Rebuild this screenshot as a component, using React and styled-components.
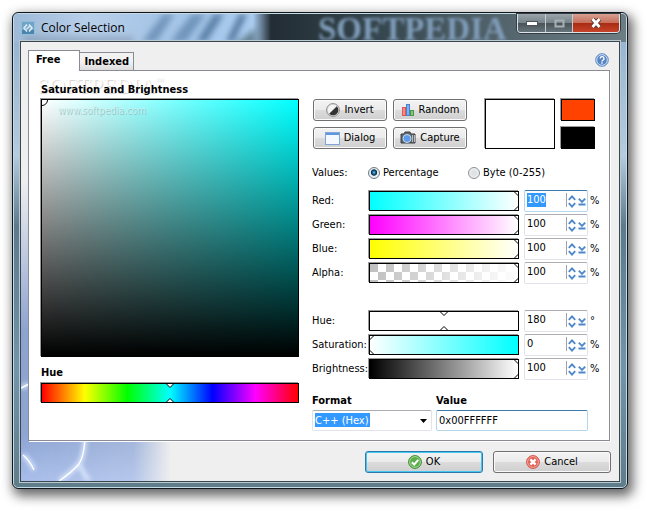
import React, { useState } from "react";
import styled, { createGlobalStyle } from "styled-components";

const GlobalStyle = createGlobalStyle`
  * {
    box-sizing: border-box;
  }
  body {
    margin: 0;
    background: #fff;
    color: #000;
    font: 11px/14px "DejaVu Sans Condensed", "DejaVu Sans", sans-serif;
  }
  button, input, select {
    font: inherit;
    color: inherit;
    margin: 0;
  }
  svg {
    flex-shrink: 0;
  }
`;

const Page = styled.div`
  padding: 12px 20px 20px 12px;
`;

const Window = styled.main`
  position: relative;
  padding: 1px 7px 6px;
  border: 1px solid #10161a;
  border-radius: 6px;
  background: linear-gradient(#8fb0d0 0, #b4cbe0 30%, #5c7a8c 45%, #7195ab 75%, #5f7c8a 100%);
  box-shadow: inset 0 0 0 1px #c5dbe6, 3px 5px 12px 2px rgba(0, 0, 0, 0.6);
`;

const TitleBar = styled.header`
  position: relative;
  display: flex;
  align-items: center;
  justify-content: space-between;
  height: 27px;
  font: 12px/16px "Open Sans", "Noto Sans", sans-serif;
`;

const Glass = styled.svg`
  position: absolute;
  left: -6px;
  top: 0;
  width: calc(100% + 12px);
  height: 28px;
  overflow: visible;
`;

const Title = styled.h1`
  position: relative;
  display: flex;
  align-items: center;
  gap: 6px;
  margin: 0;
  padding-left: 1px;
  font: inherit;
`;

const Caption = styled.div`
  position: relative;
  align-self: flex-start;
  display: flex;
  overflow: hidden;
  border: 1px solid #dde4e8;
  border-top: 0;
  border-radius: 0 0 4px 4px;
  box-shadow: 0 0 0 1px #333c42;
`;

const CaptionButton = styled.button`
  display: flex;
  align-items: center;
  justify-content: center;
  width: ${props => props.$close ? "47px" : "27px"};
  height: 18px;
  padding: 0;
  border: 0;
  border-left: ${props => props.$first ? "0" : "1px solid #c5ccd0"};
  background: ${props => props.$close
    ? "linear-gradient(#d8a091 0, #c7705c 48%, #a92a12 50%, #c5442a 100%)"
    : "linear-gradient(#9ba5ab 0, #77848b 48%, #485258 50%, #67747b 100%)"};
`;

const Client = styled.div`
  position: relative;
  overflow: hidden;
  border: 1px solid #39464d;
  outline: 1px solid #b9c9d0;
  padding: 8px 8px 8px 7px;
  background: #efefef;
`;

const Backdrop = styled.svg`
  position: absolute;
  left: 0;
  bottom: 0;
  width: 150px;
  height: 300px;
`;

const TabBar = styled.div`
  position: relative;
  display: flex;
  align-items: flex-end;
  height: 20px;
`;

const Tab = styled.button`
  height: ${props => props.$active ? "20px" : "18px"};
  padding: ${props => props.$active ? "0 19px 1px 7px" : "0 4px"};
  border: 1px solid #8b8b96;
  border-bottom: 0;
  border-left-width: ${props => props.$active ? "1px" : "0"};
  background: ${props => props.$active ? "#fff" : "linear-gradient(#f2f2f2 50%, #dcdcdc)"};
  font-weight: bold;
  white-space: nowrap;
`;

const HelpButton = styled.button`
  display: flex;
  margin: 0 2px 3px auto;
  padding: 0;
  border: 0;
  background: none;
`;

const TabPanel = styled.section`
  position: relative;
  display: flex;
  gap: 13px;
  margin-right: 1px;
  padding: 12px 14px 9px 12px;
  border: 1px solid #8b8b96;
  background: #fff;
  box-shadow: 1px 1px 0 #fff;
`;

const TabCover = styled.span`
  position: absolute;
  left: 0;
  top: -1px;
  width: 50px;
  height: 1px;
  background: #fff;
`;

const FieldColumn = styled.div`
  position: relative;
  flex: 258 1 0;
  min-width: 0;
`;

const ControlColumn = styled.div`
  flex: 283 1 0;
  min-width: 0;
`;

const Heading = styled.h2`
  margin: 0 0 2px;
  font-size: 11px;
  line-height: 14px;
  font-weight: bold;
  white-space: nowrap;
`;

const Watermark = styled.div`
  position: absolute;
  left: 8px;
  top: 3px;
  color: #fff;
  text-shadow: 1px 1px 1px #d0d0d0;
  font: 22px/24px "Liberation Serif", serif;
  pointer-events: none;
  sup {
    font-size: 8px;
    line-height: 8px;
    vertical-align: 10px;
  }
`;

const FieldMark = styled.div`
  position: absolute;
  left: 16px;
  top: 4px;
  color: rgba(215, 238, 238, 0.75);
  text-shadow: 1px 1px 0 rgba(110, 160, 160, 0.5);
  font: 10px/14px "DejaVu Sans Condensed", sans-serif;
`;

const ColorField = styled.div`
  position: relative;
  aspect-ratio: 1;
  margin-bottom: 9px;
  border: 1px solid #000;
  box-shadow: -1px -1px 0 #999;
  background: linear-gradient(transparent, #000), linear-gradient(to right, #fff, #0ff);
`;

const FieldMarker = styled.svg`
  position: absolute;
  left: 0;
  top: 0;
  width: 7px;
  height: 7px;
`;

const SliderBox = styled.div`
  position: relative;
  height: 20px;
  min-width: 0;
  border: 1px solid #000;
  box-shadow: -1px -1px 0 #999;
  background: ${props => props.$fill};
`;

const MarkerTrack = styled.div`
  position: absolute;
  inset: 0;
  overflow: hidden;
  pointer-events: none;
`;

const Range = styled.input`
  display: block;
  width: 100%;
  height: 100%;
  opacity: 0;
`;

const Marker = styled.svg`
  position: absolute;
  top: 0;
  width: 9px;
  height: 18px;
  transform: translateX(-50%);
`;

const HueLine = styled.div`
  padding-top: 1px;
`;

const TopRow = styled.div`
  display: flex;
  justify-content: space-between;
  margin-top: 16px;
  padding-left: 1px;
`;

const ActionGrid = styled.div`
  display: grid;
  grid-template-columns: 74px 74px;
  gap: 6px;
`;

const PushButton = styled.button`
  display: flex;
  align-items: center;
  justify-content: center;
  gap: 4px;
  height: 22px;
  padding: 0 2px;
  border: 1px solid ${props => props.$default ? "#2a7bab" : "#707070"};
  border-radius: 3px;
  background: linear-gradient(#f3f3f3 0, #ebebeb 48%, #dcdcdc 50%, #cfcfcf 100%);
  box-shadow: inset 0 0 0 1px ${props => props.$default ? "#44c8f3" : "#fafafa"};
  white-space: nowrap;
`;

const Swatches = styled.div`
  display: grid;
  grid-template-columns: 70px 34px;
  grid-template-rows: 22px 22px;
  gap: 6px;
`;

const Swatch = styled.div`
  grid-row: ${props => props.$tall ? "1 / 3" : "auto"};
  border: 1px solid #000;
  box-shadow: -1px -1px 0 #999;
  background: ${props => props.$color};
`;

const Modes = styled.div`
  display: grid;
  grid-template-columns: 56px 100px 1fr;
  align-items: center;
  height: 16px;
  margin: 16px 0 9px;
`;

const ModeLabel = styled.label`
  display: flex;
  align-items: center;
  gap: 3px;
`;

const Radio = styled.input`
  appearance: none;
  width: 12px;
  height: 12px;
  border: 1px solid #8b8f94;
  border-radius: 50%;
  background: radial-gradient(#dfe2e5 30%, #fafafa);
  &:checked {
    border-color: #6d7a84;
    background: radial-gradient(circle at 50% 45%, #7fd0f0 0, #16668f 20%, #0b2f4a 38%, #e8eef2 48%);
  }
`;

const Channels = styled.div`
  display: grid;
  gap: 2px;
  margin-bottom: ${props => props.$last ? "14px" : "26px"};
`;

const ChannelRow = styled.div`
  display: grid;
  grid-template-columns: 57px 1fr 64px 12px;
  align-items: center;
  height: 22px;
`;

const ChannelLabel = styled.label`
  white-space: nowrap;
`;

const SpinBox = styled.div`
  display: flex;
  align-items: flex-start;
  height: 22px;
  margin-left: 5px;
  margin-right: -5px;
  border: 1px solid ${props => props.$focused ? "#b5d5ec" : "#e2e3ea"};
  border-top-color: ${props => props.$focused ? "#3d7bad" : "#abadb3"};
  border-radius: 2px;
`;

const SpinInput = styled.input`
  flex: 1;
  min-width: 0;
  height: 14px;
  margin-top: 2px;
  padding: 0 0 0 2px;
  border: 0;
  border-right: 1px solid #a0a0a0;
  outline: 0;
  background: ${props => props.$focused
    ? "linear-gradient(#3399ff, #3399ff) 2px 0 / 19px 14px no-repeat"
    : "none"};
  color: ${props => props.$focused ? "#fff" : "#000"};
`;

const SpinButton = styled.button`
  display: flex;
  padding: 4px 1px 0;
  border: 0;
  background: none;
`;

const Unit = styled.span`
  padding-left: 7px;
`;

const OutputRow = styled.div`
  display: grid;
  grid-template-columns: 120px 1fr;
  gap: 4px;
  margin-right: 7px;
`;

const OutputLabel = styled.label`
  display: block;
  margin-bottom: 2px;
  font-weight: bold;
`;

const SelectBox = styled.div`
  position: relative;
`;

const Select = styled.select`
  display: block;
  appearance: none;
  width: 100%;
  height: 21px;
  padding: 0 0 0 2px;
  border: 1px solid #e2e3ea;
  border-top-color: #abadb3;
  border-radius: 2px;
  background: linear-gradient(#3399ff, #3399ff) 2px 2px / 55px 14px no-repeat #fff;
  color: #fff;
`;

const SelectArrow = styled.svg`
  position: absolute;
  right: 5px;
  top: 9px;
  width: 7px;
  height: 4px;
  pointer-events: none;
`;

const ValueInput = styled.input`
  display: block;
  width: 100%;
  height: 21px;
  padding: 0 2px;
  border: 1px solid #b5d5ec;
  border-top-color: #3d7bad;
  border-radius: 2px;
`;

const Footer = styled.footer`
  position: relative;
  display: grid;
  grid-template-columns: 118px 118px;
  justify-content: end;
  gap: 10px;
  margin-top: 10px;
`;

const InvertIcon = () => (
  <svg width="14" height="14" viewBox="0 0 14 14">
    <circle cx="7" cy="7" r="6.4" fill="#e4e4e4" stroke="#8a8a8a" />
    <circle cx="7" cy="7" r="4.9" fill="#f4f4f4" />
    <path d="M10.8 3.2A5.3 5.3 0 0 1 3.2 10.8Z" fill="#333" />
  </svg>
);

const RandomIcon = () => (
  <svg width="14" height="14" viewBox="0 0 14 14">
    <rect x="1.5" y="4.5" width="3" height="8" fill="#f58c8c" stroke="#e05656" />
    <rect x="5.5" y="1.5" width="3" height="11" fill="#7db0ee" stroke="#4a80cc" />
    <rect x="9.5" y="7.5" width="3" height="5" fill="#86c77e" stroke="#4a9443" />
  </svg>
);

const DialogIcon = () => (
  <svg width="15" height="13" viewBox="0 0 15 13">
    <rect x="0.5" y="0.5" width="14" height="12" fill="#f4f9ff" stroke="#7fa6d4" />
    <rect x="1" y="1" width="13" height="2" fill="#5f98dc" />
  </svg>
);

const CaptureIcon = () => (
  <svg width="16" height="14" viewBox="0 0 16 14">
    <path d="M1 3h3l1-2h5l1 2h4v9H1Z" fill="#62666c" stroke="#3b3f44" />
    <circle cx="7" cy="7.5" r="4" fill="#5b9bea" stroke="#c5d9f0" />
    <path d="M12.5 4v7M14.5 4v7" stroke="#b9bcc0" />
  </svg>
);

const OkIcon = () => (
  <svg width="14" height="14" viewBox="0 0 14 14">
    <circle cx="7" cy="7" r="6.4" fill="#5cae4a" stroke="#3c8a32" />
    <circle cx="7" cy="7" r="5.4" fill="none" stroke="#a3d796" />
    <path d="M3.8 7.2 6.2 9.5 10.3 4.8" fill="none" stroke="#fff" strokeWidth="2" />
  </svg>
);

const CancelIcon = () => (
  <svg width="14" height="14" viewBox="0 0 14 14">
    <circle cx="7" cy="7" r="6.4" fill="#e35d50" stroke="#d0564b" />
    <circle cx="7" cy="7" r="5.4" fill="none" stroke="#f3aaa2" />
    <path d="M4.4 4.4 9.6 9.6M9.6 4.4 4.4 9.6" stroke="#fff" strokeWidth="2.5" />
  </svg>
);

const HelpIcon = () => (
  <svg width="14" height="14" viewBox="0 0 14 14">
    <circle cx="7" cy="7" r="6.4" fill="#5584c4" stroke="#7d9fce" />
    <circle cx="7" cy="7" r="5.3" fill="none" stroke="#cfdff4" />
    <path d="M5.2 5.6a1.9 1.9 0 1 1 2.6 1.7q-.8.3-.8 1.2M7 9.3v1.4" fill="none" stroke="#fff" strokeWidth="1.4" />
  </svg>
);

const AppIcon = () => (
  <svg width="14" height="14" viewBox="0 0 14 14">
    <rect x="0.5" y="0.5" width="13" height="13" fill="#6fa5c8" stroke="#94bcd6" />
    <path d="M1 9h12v4H1Z" fill="#4a86ae" />
    <path d="M6 3.5 3 7l3 3.5M8 3.5 11 7l-3 3.5M5.5 8l3-2.5" fill="none" stroke="#dcecf5" strokeWidth="1.6" />
  </svg>
);

const SpinArrows = () => (
  <svg width="8" height="13" viewBox="0 0 8 13">
    <path d="M.8 4.8 4 1.4 7.2 4.8M.8 8.2 4 11.6 7.2 8.2" fill="none" stroke="#4e88c9" strokeWidth="1.9" />
  </svg>
);

const SpinDrop = () => (
  <svg width="8" height="13" viewBox="0 0 8 13">
    <path d="M.8 3.6 4 6.8 7.2 3.6M.5 9.5h7" fill="none" stroke="#4e88c9" strokeWidth="1.9" />
  </svg>
);

const GlassArt = () => (
  <Glass viewBox="0 0 612 28" preserveAspectRatio="none">
    <defs>
      <filter id="soft"><feGaussianBlur stdDeviation="3" /></filter>
      <filter id="softText"><feGaussianBlur stdDeviation="1.8" /></filter>
      <linearGradient id="sky">
        <stop offset="0" stopColor="#9dbad8" />
        <stop offset=".12" stopColor="#b8cfe9" />
        <stop offset=".24" stopColor="#a5c4e6" />
        <stop offset=".39" stopColor="#aacdf0" />
        <stop offset=".42" stopColor="#222d34" />
        <stop offset=".6" stopColor="#36474f" />
        <stop offset=".82" stopColor="#56676f" />
        <stop offset="1" stopColor="#6d7d84" />
      </linearGradient>
      <clipPath id="bar"><path d="M0 28V4Q0 0 4 0H608Q612 0 612 4V28Z" /></clipPath>
    </defs>
    <g clipPath="url(#bar)">
      <rect width="612" height="28" fill="url(#sky)" />
      <g filter="url(#soft)">
        <path d="M10 22H120V32H10Z" fill="#8398b3" opacity=".6" />
        <path d="M128 28 150 0h10L142 28ZM156 28 178 0h14L172 28Z" fill="#5a7fa8" opacity=".7" />
        <path d="M182 28 200 0h10L192 28Z" fill="#466a94" opacity=".8" />
        <path d="M212 28 226 0h7L219 28Z" fill="#4d6f98" />
        <path d="M218 32 242 14V32Z" fill="#56707f" opacity=".8" />
      </g>
      <text
        x="304" y="26" fill="#7f9cb9" filter="url(#softText)"
        fontFamily="Liberation Serif, serif" fontWeight="bold" fontSize="33"
      >
        SOFTPEDIA
      </text>
    </g>
  </Glass>
);

const BackdropArt = () => (
  <Backdrop viewBox="0 0 150 300">
    <defs>
      <linearGradient id="fade">
        <stop offset="0" stopColor="#fff" />
        <stop offset=".75" stopColor="#fff" stopOpacity=".8" />
        <stop offset="1" stopColor="#fff" stopOpacity="0" />
      </linearGradient>
      <linearGradient id="rise" x2="0" y2="1">
        <stop offset="0" stopColor="#8ca2d0" stopOpacity="0" />
        <stop offset=".5" stopColor="#8ca2d0" />
        <stop offset=".85" stopColor="#8da5d3" />
        <stop offset="1" stopColor="#a8bdea" />
      </linearGradient>
      <mask id="edge"><rect width="150" height="300" fill="url(#fade)" /></mask>
      <filter id="glow"><feGaussianBlur stdDeviation="2" /></filter>
    </defs>
    <g mask="url(#edge)">
      <rect width="150" height="300" fill="url(#rise)" />
      <path d="M64 258Q63 275 58 283Q51 291 38 300M58 283Q62 292 68 300M0 207 8 203M2 274Q9 280 13 289" fill="none" stroke="#dce9ff" strokeWidth="5" filter="url(#glow)" opacity=".8" />
      <path d="M64 258Q63 275 58 283Q51 291 38 300M0 207 8 203M2 274Q9 280 13 289" fill="none" stroke="#fff" strokeWidth="1.4" />
    </g>
  </Backdrop>
);

const checker = `linear-gradient(to right, rgba(255, 255, 255, 0), #fff),
  repeating-conic-gradient(#fff 0 25%, #c0c0c0 0 50%) 0 0 / 16px 16px`;

const rainbow = "linear-gradient(to right, red, yellow, lime, cyan, blue, magenta, red)";

const rgba = [
  { name: "Red", fill: "linear-gradient(to right, #0ff, #fff)", value: 100, max: 100, unit: "%", focused: true },
  { name: "Green", fill: "linear-gradient(to right, #f0f, #fff)", value: 100, max: 100, unit: "%" },
  { name: "Blue", fill: "linear-gradient(to right, #ff0, #fff)", value: 100, max: 100, unit: "%" },
  { name: "Alpha", fill: checker, value: 100, max: 100, unit: "%" },
];

const hsb = [
  { name: "Hue", fill: "#fff", value: 180, max: 360, unit: "°" },
  { name: "Saturation", fill: "linear-gradient(to right, #fff, #0ff)", value: 0, max: 100, unit: "%" },
  { name: "Brightness", fill: "linear-gradient(to right, #000, #fff)", value: 100, max: 100, unit: "%" },
];

const Slider = ({ label, fill, value, max, onChange }) => (
  <SliderBox $fill={fill}>
    <Range
      type="range" aria-label={label} min="0" max={max} value={value}
      onChange={e => onChange(Number(e.target.value))}
    />
    <MarkerTrack>
      <Marker viewBox="0 0 9 18" style={{ left: `${(value / max) * 100}%` }}>
        <path d="M.5-.5 4.5 3.5 8.5-.5M.5 18.5 4.5 14.5 8.5 18.5" fill="#fff" stroke="#000" />
      </Marker>
    </MarkerTrack>
  </SliderBox>
);

const Channel = ({ item }) => {
  const [value, setValue] = useState(item.value);
  const id = item.name.toLowerCase();
  return (
    <ChannelRow>
      <ChannelLabel htmlFor={id}>{item.name}:</ChannelLabel>
      <Slider label={`${item.name} slider`} fill={item.fill} value={value} max={item.max} onChange={setValue} />
      <SpinBox $focused={item.focused}>
        <SpinInput
          id={id} $focused={item.focused} value={value}
          onChange={e => setValue(Math.min(item.max, Number(e.target.value) || 0))}
        />
        <SpinButton aria-label={`Step ${id}`}><SpinArrows /></SpinButton>
        <SpinButton aria-label={`Open ${id} slider`}><SpinDrop /></SpinButton>
      </SpinBox>
      <Unit>{item.unit}</Unit>
    </ChannelRow>
  );
};

const App = () => {
  const [hue, setHue] = useState(180);
  const [mode, setMode] = useState("percentage");
  const [code, setCode] = useState("0x00FFFFFF");

  return (
    <Page>
      <GlobalStyle />
      <Window>
        <TitleBar>
          <GlassArt />
          <Title><AppIcon />Color Selection</Title>
          <Caption>
            <CaptionButton $first aria-label="Minimize">
              <svg width="12" height="5"><rect x=".5" y=".5" width="11" height="4" fill="#fff" stroke="#4b5358" /></svg>
            </CaptionButton>
            <CaptionButton aria-label="Maximize" disabled>
              <svg width="11" height="9"><rect x="1.5" y="1.5" width="8" height="6" fill="none" stroke="#a9b0b4" strokeWidth="2" /></svg>
            </CaptionButton>
            <CaptionButton $close aria-label="Close">
              <svg width="12" height="10" viewBox="0 0 12 10">
                <path d="M2.5 1 9.5 9M9.5 1 2.5 9" stroke="#54332d" strokeWidth="4.6" />
                <path d="M2.5 1 9.5 9M9.5 1 2.5 9" stroke="#fff" strokeWidth="2.8" />
              </svg>
            </CaptionButton>
          </Caption>
        </TitleBar>
        <Client>
          <BackdropArt />
          <TabBar>
            <Tab $active>Free</Tab>
            <Tab>Indexed</Tab>
            <HelpButton aria-label="Help"><HelpIcon /></HelpButton>
          </TabBar>
          <TabPanel>
            <TabCover />
            <Watermark>SOFTPEDIA<sup>™</sup></Watermark>
            <FieldColumn>
              <Heading>Saturation and Brightness</Heading>
              <ColorField>
                <FieldMarker viewBox="0 0 7 7">
                  <circle r="5.5" fill="#fff" stroke="#000" />
                </FieldMarker>
                <FieldMark>www.softpedia.com</FieldMark>
              </ColorField>
              <Heading>Hue</Heading>
              <HueLine>
                <Slider label="Hue" fill={rainbow} value={hue} max={360} onChange={setHue} />
              </HueLine>
            </FieldColumn>
            <ControlColumn>
              <TopRow>
                <ActionGrid>
                  <PushButton><InvertIcon />Invert</PushButton>
                  <PushButton><RandomIcon />Random</PushButton>
                  <PushButton><DialogIcon />Dialog</PushButton>
                  <PushButton><CaptureIcon />Capture</PushButton>
                </ActionGrid>
                <Swatches>
                  <Swatch $tall $color="#fff" />
                  <Swatch $color="#ff4200" />
                  <Swatch $color="#000" />
                </Swatches>
              </TopRow>
              <Modes>
                <span>Values:</span>
                <ModeLabel>
                  <Radio type="radio" name="mode" checked={mode === "percentage"} onChange={() => setMode("percentage")} />
                  Percentage
                </ModeLabel>
                <ModeLabel>
                  <Radio type="radio" name="mode" checked={mode === "byte"} onChange={() => setMode("byte")} />
                  Byte (0-255)
                </ModeLabel>
              </Modes>
              <Channels>
                {rgba.map(item => <Channel key={item.name} item={item} />)}
              </Channels>
              <Channels $last>
                {hsb.map(item => <Channel key={item.name} item={item} />)}
              </Channels>
              <OutputRow>
                <div>
                  <OutputLabel htmlFor="format">Format</OutputLabel>
                  <SelectBox>
                    <Select id="format"><option>C++ (Hex)</option></Select>
                    <SelectArrow viewBox="0 0 7 4"><path d="M0 0h7L3.5 4Z" /></SelectArrow>
                  </SelectBox>
                </div>
                <div>
                  <OutputLabel htmlFor="value">Value</OutputLabel>
                  <ValueInput id="value" value={code} onChange={e => setCode(e.target.value)} />
                </div>
              </OutputRow>
            </ControlColumn>
          </TabPanel>
          <Footer>
            <PushButton $default><OkIcon />OK</PushButton>
            <PushButton><CancelIcon />Cancel</PushButton>
          </Footer>
        </Client>
      </Window>
    </Page>
  );
};

export default App;
